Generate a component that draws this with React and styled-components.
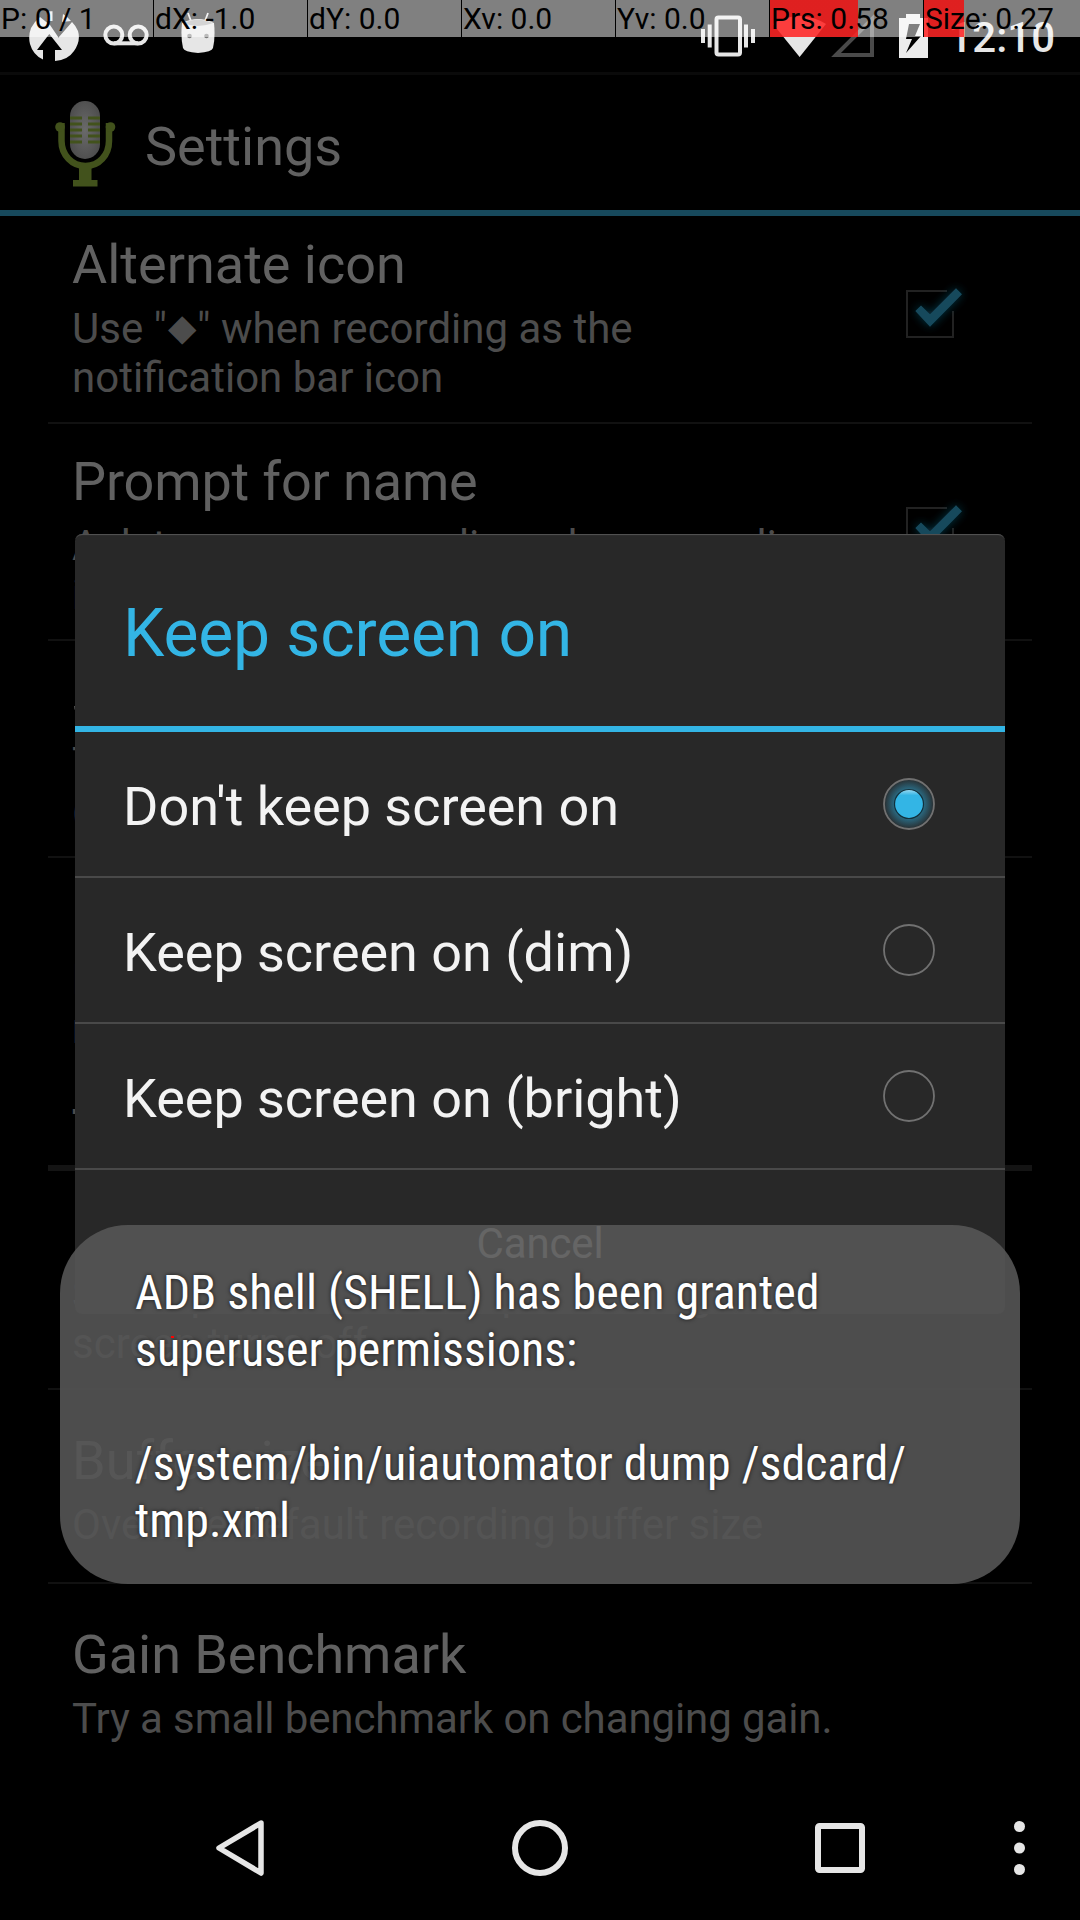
import React from "react";
import styled, { createGlobalStyle } from "styled-components";

const GlobalStyle = createGlobalStyle`
  html, body { margin: 0; padding: 0; background: #000; }
  * { box-sizing: border-box; }
`;

const Device = styled.div`
  position: relative;
  display: flex;
  flex-direction: column;
  width: 1080px;
  height: 1920px;
  overflow: hidden;
  background: #000;
  font-family: Roboto, "Liberation Sans", sans-serif;
  white-space: nowrap;
`;

/* ---------- status bar ---------- */
const StatusBar = styled.header`
  display: flex;
  justify-content: space-between;
  flex: none;
  height: 75px;
  padding: 0 25px 0 29px;
  border-bottom: 3px solid #0a0a0a;
`;
const StatusGroup = styled.div`
  display: flex;
  align-items: flex-start;
  gap: ${(p) => p.$gap || 0}px;
`;
const StatusSpacer = styled.span`
  width: ${(p) => p.$width}px;
`;
const Clock = styled.span`
  color: #e6e6e6;
  font-size: 42px;
  font-weight: 500;
  line-height: 49px;
  padding-top: 13px;
  margin-left: 20px;
`;

/* ---------- pointer read-out ---------- */
const PointerBar = styled.div`
  position: absolute;
  top: 0;
  left: 0;
  display: grid;
  grid-template-columns: repeat(6, 154px) 1fr;
  width: 1080px;
  height: 37px;
`;
const PointerCell = styled.div`
  height: 37px;
  padding-left: 1px;
  border-right: ${(p) => (p.$last ? "none" : "1px solid #000")};
  color: #000;
  font-size: 30px;
  line-height: 37px;
  background: linear-gradient(
    to right,
    rgba(255, 0, 0, 0.75) ${(p) => p.$level || 0}px,
    transparent ${(p) => p.$level || 0}px
  ), rgba(255, 255, 255, 0.5);
`;

/* ---------- action bar ---------- */
const ActionBar = styled.div`
  display: flex;
  align-items: center;
  flex: none;
  height: 141px;
  padding: 3px 0 0 48px;
  border-bottom: 6px solid #17495c;
`;
const ScreenTitle = styled.h1`
  margin: 5px 0 0 25px;
  color: #616161;
  font-size: 54px;
  font-weight: 400;
  line-height: 63px;
`;

/* ---------- preference list ---------- */
const PreferenceViewport = styled.main`
  flex: none;
  height: 1560px;
  padding: 0 48px;
  overflow: hidden;
`;
const PreferenceList = styled.div`
  display: flex;
  flex-direction: column;
  margin-top: -9px;
`;
const Preference = styled.section`
  display: flex;
  align-items: center;
  justify-content: space-between;
  flex: none;
  min-height: ${(p) => (p.$divider ? 194 : 192)}px;
  padding: 0 54px 0 24px;
  border-bottom: ${(p) => (p.$divider ? "2px solid #111" : "none")};
`;
const PreferenceText = styled.div`
  padding: 26px 0 20px;
`;
const PreferenceTitle = styled.h2`
  margin: 0 0 8px;
  color: #616161;
  font-size: 54px;
  font-weight: 400;
  line-height: 63px;
  letter-spacing: ${(p) => p.$tracking || "normal"};
`;
const PreferenceSummary = styled.p`
  margin: 0;
  color: #4c4c4c;
  font-size: 42px;
  line-height: 49px;
  white-space: pre-line;
  letter-spacing: ${(p) => p.$tracking || "normal"};
`;
const Diamond = styled.span`
  display: inline-block;
  width: 30px;
  height: 30px;
  font-size: 37px;
  line-height: 30px;
  text-align: center;
  vertical-align: 3px;
`;
const CheckSlot = styled.div`
  display: flex;
  padding-top: 6px;
`;
const CategoryHeader = styled.h3`
  flex: none;
  height: 98px;
  margin: 0 0 2px;
  padding: 27px 24px 0;
  border-bottom: 6px solid #141414;
  color: #4c4c4c;
  font-size: 42px;
  font-weight: 700;
  line-height: 49px;
`;

/* ---------- dialog ---------- */
const Dialog = styled.div`
  position: absolute;
  left: 75px;
  top: 534px;
  display: flex;
  flex-direction: column;
  width: 930px;
  height: 780px;
  border-radius: 7px;
  background: #282828;
  box-shadow: inset 0 2px 1px -1px #555;
`;
const DialogTitle = styled.h2`
  flex: none;
  height: 198px;
  margin: 0;
  padding: 61px 48px 0;
  border-bottom: 6px solid #33b5e5;
  color: #33b5e5;
  font-size: 66px;
  font-weight: 400;
  line-height: 77px;
  letter-spacing: -0.15px;
`;
const Choice = styled.div`
  display: flex;
  align-items: center;
  justify-content: space-between;
  flex: none;
  height: 146px;
  padding: 0 66px 0 48px;
  border-bottom: 2px solid #494949;
`;
const ChoiceLabel = styled.span`
  padding-top: 5px;
  color: #f3f3f3;
  font-size: 54px;
  line-height: 63px;
  letter-spacing: -0.03px;
`;
const DialogButton = styled.div`
  display: flex;
  align-items: center;
  justify-content: center;
  flex: 1;
  padding-top: 3px;
  color: #f3f3f3;
  font-size: 42px;
  line-height: 49px;
  letter-spacing: -0.15px;
`;

/* ---------- toast ---------- */
const Toast = styled.div`
  position: absolute;
  left: 60px;
  top: 1225px;
  width: 960px;
  height: 359px;
  padding: 39px 75px;
  border-radius: 68px;
  background: rgba(85, 85, 85, 0.9);
`;
const ToastText = styled.p`
  margin: 0;
  color: #fff;
  font-family: "Roboto Condensed", Roboto, sans-serif;
  font-size: 48px;
  line-height: 57px;
  white-space: pre;
  text-shadow: 0 0 4px rgba(0, 0, 0, 0.7);
`;
const TouchPoint = styled.i`
  position: absolute;
  left: 171px;
  top: 1336px;
  width: 3px;
  height: 2px;
  background: #f00;
`;

/* ---------- navigation bar ---------- */
const NavigationBar = styled.nav`
  display: flex;
  align-items: center;
  justify-content: space-between;
  flex: none;
  height: 144px;
  padding: 0 54px 0 210px;
`;
const NavigationKeys = styled.div`
  display: flex;
  gap: 240px;
`;

const MicIcon = () => (
  <svg width="72" height="96" viewBox="0 0 72 96">
    <defs>
      <radialGradient id="mic" cx="50%" cy="50%" r="60%">
        <stop offset="0" stopColor="#6a6a6a" />
        <stop offset="1" stopColor="#4b4b4b" />
      </radialGradient>
    </defs>
    <rect x="22" y="5" width="30" height="58" rx="15" fill="url(#mic)" />
    <path d="M22 22h12M40 22h12M22 28h12M40 28h12M22 34h12M40 34h12M22 40h12M40 40h12M22 46h12M40 46h12" stroke="#42521c" strokeWidth="3" />
    <path d="M13.500 27V45C13.500 59 24 70 37.500 70S61 59 61 45V27" fill="none" stroke="#42521c" strokeWidth="6.500" />
    <circle cx="12" cy="31" r="4.800" fill="#42521c" />
    <circle cx="62.500" cy="31" r="4.800" fill="#42521c" />
    <path d="M31 68H43.500V84H49.500V90.500H25V84H31Z" fill="#42521c" />
  </svg>
);

const CheckIcon = () => (
  <svg width="96" height="96" viewBox="0 0 96 96">
    <defs>
      <filter id="halo" x="-50%" y="-50%" width="200%" height="200%">
        <feDropShadow dx="0" dy="0" stdDeviation="5" floodColor="#146482" floodOpacity="0.55" />
      </filter>
    </defs>
    <path d="M65 21H25V67H71V41" fill="none" stroke="#222" strokeWidth="2" />
    <path d="M33.300 41L39 35.500L48 44.300L74 18.300L80 24.300L48 56.800Z" fill="#17495c" filter="url(#halo)" />
  </svg>
);

const RadioIcon = ({ checked }) => (
  <svg width="60" height="60" viewBox="0 0 60 60">
    <defs>
      <radialGradient id="glow">
        <stop offset="0.550" stopColor="#2a6f89" />
        <stop offset="1" stopColor="#292d2f" />
      </radialGradient>
      <linearGradient id="dot" x1="0" y1="0" x2="0" y2="1">
        <stop offset="0" stopColor="#9fdcf3" />
        <stop offset="0.200" stopColor="#33b5e5" />
      </linearGradient>
    </defs>
    {checked && <circle cx="30" cy="30" r="25" fill="url(#glow)" />}
    <circle cx="30" cy="30" r="25" fill="none" stroke="#717171" strokeWidth="1.800" />
    {checked && <circle cx="30" cy="30" r="14.500" fill="url(#dot)" stroke="#12303b" strokeWidth="1.200" />}
  </svg>
);

const RecoveryIcon = () => (
  <svg width="50" height="62" viewBox="29 0 50 62">
    <path
      d="M40 17Q34 22 31 28Q28 36 30 44Q33 55 43 59.500V50H37L49.300 34L62 50H55V61Q68 60 74 51Q81 41 78 31Q76 26 72 22L58.500 37.500L50 25Z"
      fill="#e6e6e6"
    />
    <path d="M47 11.500Q50 11 52.500 11.200V21H47ZM63 14Q68 17 71 21L62 22Z" fill="#e6e6e6" />
  </svg>
);
const VoicemailIcon = () => (
  <svg width="46" height="46" viewBox="0 0 46 46">
    <g fill="none" stroke="#e6e6e6" strokeWidth="4">
      <circle cx="10.800" cy="35" r="8.500" />
      <circle cx="35.200" cy="35" r="8.500" />
      <path d="M10.800 43.300H35.200" />
    </g>
  </svg>
);
const DroidIcon = () => (
  <svg width="34" height="54" viewBox="0 0 34 54">
    <path d="M7 13L10 21M27 13L24 21" stroke="#e6e6e6" strokeWidth="1.800" />
    <path d="M1 23Q17 15 33 23Q34.500 37 32 48Q31 52 17 53Q3 52 2 48Q-.5 37 1 23Z" fill="#e6e6e6" />
    <path d="M2 23Q17 16 32 23Q17 29 2 23Z" fill="#a9a9a9" />
    <circle cx="8.500" cy="36" r="2.300" fill="#777" />
    <circle cx="25.500" cy="36" r="2.300" fill="#777" />
  </svg>
);
const VibrateIcon = () => (
  <svg width="56" height="62" viewBox="700 0 56 62">
    <rect x="716.500" y="17.500" width="23.500" height="37" rx="2" fill="none" stroke="#e6e6e6" strokeWidth="4" />
    <path d="M703 29V43M709.700 24.500V47.500M746 24.500V47.500M753 29V43" stroke="#e6e6e6" strokeWidth="4" />
  </svg>
);
const WifiIcon = () => (
  <svg width="54" height="62" viewBox="772 0 54 62">
    <path d="M773 24Q799.500 8 826 24L799.600 57Z" fill="#e6e6e6" />
  </svg>
);
const SignalIcon = () => (
  <svg width="43" height="62" viewBox="831 0 43 62">
    <path d="M836 55L872 19V55Z" fill="none" stroke="#4a4a4a" strokeWidth="4" />
  </svg>
);
const BatteryIcon = () => (
  <svg width="30" height="62" viewBox="898 0 30 62">
    <path
      fillRule="evenodd"
      d="M899 18H906V14H920V18H928V58H899ZM909 24L906 39H912L906 53L921 36H915L920 24Z"
      fill="#ececec"
    />
  </svg>
);

const BackIcon = () => (
  <svg width="60" height="60" viewBox="0 0 60 60">
    <path d="M51 5L9 30L51 55Z" fill="none" stroke="#e6e6e6" strokeWidth="5.500" strokeLinejoin="round" />
  </svg>
);
const HomeIcon = () => (
  <svg width="60" height="60" viewBox="0 0 60 60">
    <circle cx="30" cy="30" r="25" fill="none" stroke="#e6e6e6" strokeWidth="6" />
  </svg>
);
const RecentsIcon = () => (
  <svg width="60" height="60" viewBox="0 0 60 60">
    <rect x="8" y="8" width="44" height="44" rx="1.500" fill="none" stroke="#e6e6e6" strokeWidth="6" />
  </svg>
);
const MenuIcon = () => (
  <svg width="12" height="60" viewBox="0 0 12 60">
    <g fill="#e6e6e6">
      <circle cx="5.500" cy="8.500" r="5.500" />
      <circle cx="5.500" cy="30" r="5.500" />
      <circle cx="5.500" cy="51.500" r="5.500" />
    </g>
  </svg>
);

const readings = [
  { text: "P: 0 / 1" },
  { text: "dX: -1.0" },
  { text: "dY: 0.0" },
  { text: "Xv: 0.0" },
  { text: "Yv: 0.0" },
  { text: "Prs: 0.58", level: 88 },
  { text: "Size: 0.27", level: 40 },
];

const choices = ["Don't keep screen on", "Keep screen on (dim)", "Keep screen on (bright)"];

function PreferenceRow({ title, titleTracking, summary, summaryTracking, checkbox, divider = true }) {
  return (
    <Preference $divider={divider}>
      <PreferenceText>
        <PreferenceTitle $tracking={titleTracking}>{title}</PreferenceTitle>
        <PreferenceSummary $tracking={summaryTracking}>{summary}</PreferenceSummary>
      </PreferenceText>
      {checkbox && (
        <CheckSlot>
          <CheckIcon />
        </CheckSlot>
      )}
    </Preference>
  );
}

export default function App() {
  return (
    <>
      <GlobalStyle />
      <Device>
        <StatusBar>
          <StatusGroup $gap={24}>
            <RecoveryIcon />
            <VoicemailIcon />
            <StatusGroup>
              <StatusSpacer $width={8} />
              <DroidIcon />
            </StatusGroup>
          </StatusGroup>
          <StatusGroup>
            <StatusGroup $gap={16}>
              <VibrateIcon />
              <WifiIcon />
            </StatusGroup>
            <StatusSpacer $width={5} />
            <StatusGroup $gap={24}>
              <SignalIcon />
              <BatteryIcon />
            </StatusGroup>
            <Clock>12:10</Clock>
          </StatusGroup>
        </StatusBar>

        <ActionBar>
          <MicIcon />
          <ScreenTitle>Settings</ScreenTitle>
        </ActionBar>

        <PreferenceViewport>
          <PreferenceList>
            <PreferenceRow
              title="Alternate icon"
              summary={
                <>
                  Use "<Diamond>◆</Diamond>" when recording as the{"\n"}notification bar icon
                </>
              }
              checkbox
            />
            <PreferenceRow
              title="Prompt for name"
              titleTracking="-0.15px"
              summary={"Ask to name a recording when recording\nis stopped"}
              checkbox
            />
            <PreferenceRow title="Storage" summary={"The directory in use\n(internal or card)"} />
            <PreferenceRow title="File name" summary={"Format of the names of new\nrecordings"} divider={false} />
            <CategoryHeader>TWEAKS</CategoryHeader>
            <PreferenceRow
              title="Keep screen on"
              summary={"Some phones can't keep recording when\nscreen turns off"}
            />
            <PreferenceRow title="Buffer size" summary="Override default recording buffer size" />
            <PreferenceRow
              title="Gain Benchmark"
              titleTracking="-0.05px"
              summary="Try a small benchmark on changing gain."
              summaryTracking="-0.1px"
              divider={false}
            />
          </PreferenceList>
        </PreferenceViewport>

        <NavigationBar>
          <NavigationKeys>
            <BackIcon />
            <HomeIcon />
            <RecentsIcon />
          </NavigationKeys>
          <MenuIcon />
        </NavigationBar>

        <Dialog>
          <DialogTitle>Keep screen on</DialogTitle>
          {choices.map((label, index) => (
            <Choice key={label}>
              <ChoiceLabel>{label}</ChoiceLabel>
              <RadioIcon checked={index === 0} />
            </Choice>
          ))}
          <DialogButton>Cancel</DialogButton>
        </Dialog>

        <Toast>
          <ToastText>
            {"ADB shell (SHELL) has been granted\nsuperuser permissions:\n\n/system/bin/uiautomator dump /sdcard/\ntmp.xml"}
          </ToastText>
        </Toast>
        <TouchPoint />

        <PointerBar>
          {readings.map(({ text, level }, index) => (
            <PointerCell key={text} $level={level} $last={index === readings.length - 1}>
              {text}
            </PointerCell>
          ))}
        </PointerBar>
      </Device>
    </>
  );
}
